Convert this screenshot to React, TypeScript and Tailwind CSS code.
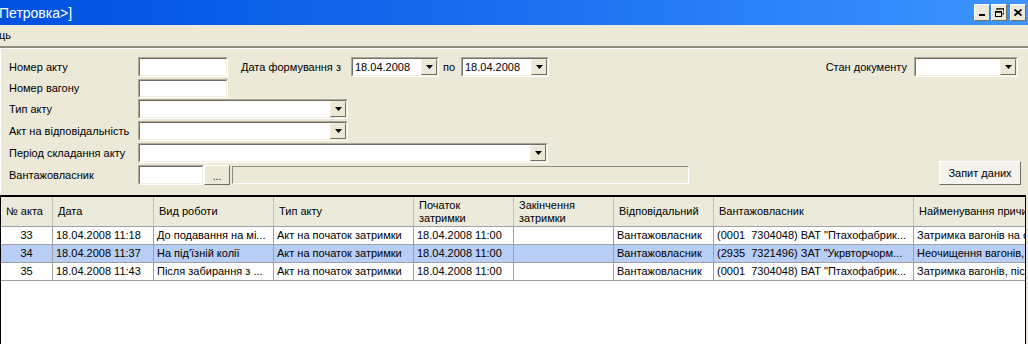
import React from "react";

// Sunken 3D frame used by text boxes and combo boxes
const Sunken: React.FC<{ className?: string; children?: React.ReactNode; disabled?: boolean }> = ({ className = "", children, disabled }) => (
  <div className={`border border-t-[#aca899] border-l-[#aca899] border-b-white border-r-white ${className}`}>
    <div
      className={`h-full w-full border border-t-[#716f64] border-l-[#716f64] border-b-[#f1efe2] border-r-[#f1efe2] flex items-center ${
        disabled ? "bg-[#ece9d8]" : "bg-white"
      }`}
    >
      {children}
    </div>
  </div>
);

const DropButton: React.FC = () => (
  <div className="h-full w-[16px] border border-t-[#f1efe2] border-l-[#f1efe2] border-b-[#716f64] border-r-[#716f64] bg-[#ece9d8] flex items-center justify-center">
    <svg width="7" height="4" viewBox="0 0 7 4">
      <path d="M0 0h7L3.5 4z" fill="#000" />
    </svg>
  </div>
);

const Combo: React.FC<{ className?: string; value?: string }> = ({ className = "", value }) => (
  <Sunken className={className}>
    <div className="flex-1 px-[2px] text-[11px] text-black truncate">{value}</div>
    <DropButton />
  </Sunken>
);

const Label: React.FC<{ className?: string; children: React.ReactNode }> = ({ className = "", children }) => (
  <span className={`text-[11px] text-black whitespace-nowrap ${className}`}>{children}</span>
);

const TitleButton: React.FC<{ children: React.ReactNode }> = ({ children }) => (
  <div className="w-[16px] h-[17px] bg-[#ece9d8] border border-t-white border-l-white border-b-[#716f64] border-r-[#716f64] flex items-center justify-center">
    {children}
  </div>
);

interface Column {
  title: string[];
  width: number;
  align?: "center";
}

const columns: Column[] = [
  { title: ["№ акта"], width: 52, align: "center" },
  { title: ["Дата"], width: 101 },
  { title: ["Вид роботи"], width: 120 },
  { title: ["Тип акту"], width: 140 },
  { title: ["Початок", "затримки"], width: 100 },
  { title: ["Закінчення", "затримки"], width: 100 },
  { title: ["Відповідальний"], width: 100 },
  { title: ["Вантажовласник"], width: 200 },
  { title: ["Найменування причини"], width: 160 },
];

const rows: { cells: string[]; selected?: boolean }[] = [
  {
    cells: [
      "33",
      "18.04.2008 11:18",
      "До подавання на мі...",
      "Акт на початок затримки",
      "18.04.2008 11:00",
      "",
      "Вантажовласник",
      '(0001  7304048) ВАТ "Птахофабрик...',
      "Затримка вагонів на станції",
    ],
  },
  {
    cells: [
      "34",
      "18.04.2008 11:37",
      "На під'їзній колії",
      "Акт на початок затримки",
      "18.04.2008 11:00",
      "",
      "Вантажовласник",
      '(2935  7321496) ЗАТ "Укрвторчорм...',
      "Неочищення вагонів, після",
    ],
    selected: true,
  },
  {
    cells: [
      "35",
      "18.04.2008 11:43",
      "Після забирання з ...",
      "Акт на початок затримки",
      "18.04.2008 11:00",
      "",
      "Вантажовласник",
      '(0001  7304048) ВАТ "Птахофабрик...',
      "Затримка вагонів, після",
    ],
  },
];

const App: React.FC = () => {
  return (
    <div className="w-[1028px] h-[344px] overflow-hidden bg-[#ece9d8] flex flex-col" style={{ fontFamily: '"Liberation Sans", Arial, sans-serif' }}>
      {/* Title bar */}
      <div className="h-[25px] shrink-0 bg-gradient-to-r from-[#0050e0] via-[#1a6ef0] to-[#3d95ff] flex items-center pr-[2px]">
        <span className="text-white text-[14px] leading-none -ml-[1px]">Петровка&gt;]</span>
        <div className="ml-auto flex items-center gap-[1px] mb-[1px]">
          <TitleButton>
            <div className="w-[6px] h-[2px] bg-black mt-[6px]" />
          </TitleButton>
          <TitleButton>
            <svg width="9" height="9" viewBox="0 0 9 9">
              <path d="M2 0h7v6h-2M2 0v2M2 1h7" stroke="#000" fill="none" strokeWidth="1" />
              <rect x="0.5" y="3.5" width="6" height="5" stroke="#000" fill="none" />
              <path d="M0 4h7" stroke="#000" strokeWidth="1.5" />
            </svg>
          </TitleButton>
          <div className="ml-[2px]">
            <TitleButton>
              <svg width="8" height="7" viewBox="0 0 8 7">
                <path d="M0.5 0.5L7.5 6.5M7.5 0.5L0.5 6.5" stroke="#000" strokeWidth="1.8" />
              </svg>
            </TitleButton>
          </div>
        </div>
      </div>

      {/* Menu bar */}
      <div className="h-[21px] shrink-0 flex items-center">
        <span className="text-[11px] text-black -ml-[1px]">ць</span>
      </div>

      {/* Filter panel */}
      <div className="shrink-0 border-t-2 border-t-[#8d8b80] h-[148px]">
        <div className="h-full border-t border-l border-t-white border-l-white pl-[8px] pt-[8px] flex flex-col gap-[2px]">
          {/* Row 1 */}
          <div className="h-[20px] flex items-center">
            <Label className="w-[129px]">Номер акту</Label>
            <Sunken className="w-[90px] h-[20px]" />
            <Label className="ml-[13px] w-[110px]">Дата формування з</Label>
            <Combo className="w-[88px] h-[20px]" value="18.04.2008" />
            <Label className="ml-[4px] w-[18px]">по</Label>
            <Combo className="w-[88px] h-[20px]" value="18.04.2008" />
            <Label className="ml-auto mr-[7px]">Стан документу</Label>
            <Combo className="w-[104px] h-[20px] mr-[10px]" />
          </div>
          {/* Row 2 */}
          <div className="h-[18px] flex items-center">
            <Label className="w-[129px]">Номер вагону</Label>
            <Sunken className="w-[90px] h-[19px]" />
          </div>
          {/* Row 3 */}
          <div className="h-[20px] flex items-center">
            <Label className="w-[129px]">Тип акту</Label>
            <Combo className="w-[210px] h-[20px]" />
          </div>
          {/* Row 4 */}
          <div className="h-[20px] flex items-center">
            <Label className="w-[129px]">Акт на відповідальність</Label>
            <Combo className="w-[210px] h-[20px]" />
          </div>
          {/* Row 5 */}
          <div className="h-[20px] flex items-center">
            <Label className="w-[129px]">Період складання акту</Label>
            <Combo className="w-[410px] h-[20px]" />
          </div>
          {/* Row 6 */}
          <div className="h-[20px] flex items-center">
            <Label className="w-[129px]">Вантажовласник</Label>
            <Sunken className="w-[66px] h-[20px]" />
            <div className="w-[26px] h-[20px] bg-[#ece9d8] border border-t-white border-l-white border-b-[#716f64] border-r-[#716f64] flex items-end justify-center pb-[2px]">
              <span className="text-[10px] leading-none text-black">...</span>
            </div>
            <div className="ml-[2px] w-[457px] h-[18px] border border-t-[#8d8b80] border-l-[#8d8b80] border-b-white border-r-white bg-[#ece9d8]" />
            <div className="ml-auto mr-[7px] -mt-[4px] w-[82px] h-[24px] bg-[#f4f3ee] border border-t-white border-l-white border-b-[#716f64] border-r-[#716f64] flex items-center justify-center">
              <span className="text-[11px] text-black">Запит даних</span>
            </div>
          </div>
        </div>
      </div>

      {/* Data grid */}
      <div className="flex-1 mt-[1px] mr-[2px] border-t-2 border-l border-r border-black bg-white overflow-hidden">
        <div className="flex h-[30px] bg-[#ebeadb] border-b border-[#a0a0a0]">
          {columns.map((c, i) => (
            <div
              key={i}
              className="shrink-0 border-r border-[#c5c2b2] flex flex-col justify-center pl-[5px] text-[11px] leading-[13px] text-black overflow-hidden whitespace-nowrap"
              style={{ width: c.width }}
            >
              {c.title.map((t, j) => (
                <span key={j}>{t}</span>
              ))}
            </div>
          ))}
        </div>
        {rows.map((r, ri) => (
          <div key={ri} className={`flex h-[18px] border-b border-[#a0a0a0] ${r.selected ? "bg-[#b9cef5]" : "bg-white"}`}>
            {r.cells.map((cell, ci) => (
              <div
                key={ci}
                className={`shrink-0 border-r border-[#a0a0a0] flex items-center text-[11px] text-black overflow-hidden whitespace-pre ${
                  columns[ci].align === "center" ? "justify-center" : "pl-[3px]"
                }`}
                style={{ width: columns[ci].width }}
              >
                {cell}
              </div>
            ))}
          </div>
        ))}
      </div>
    </div>
  );
};

export default App;
